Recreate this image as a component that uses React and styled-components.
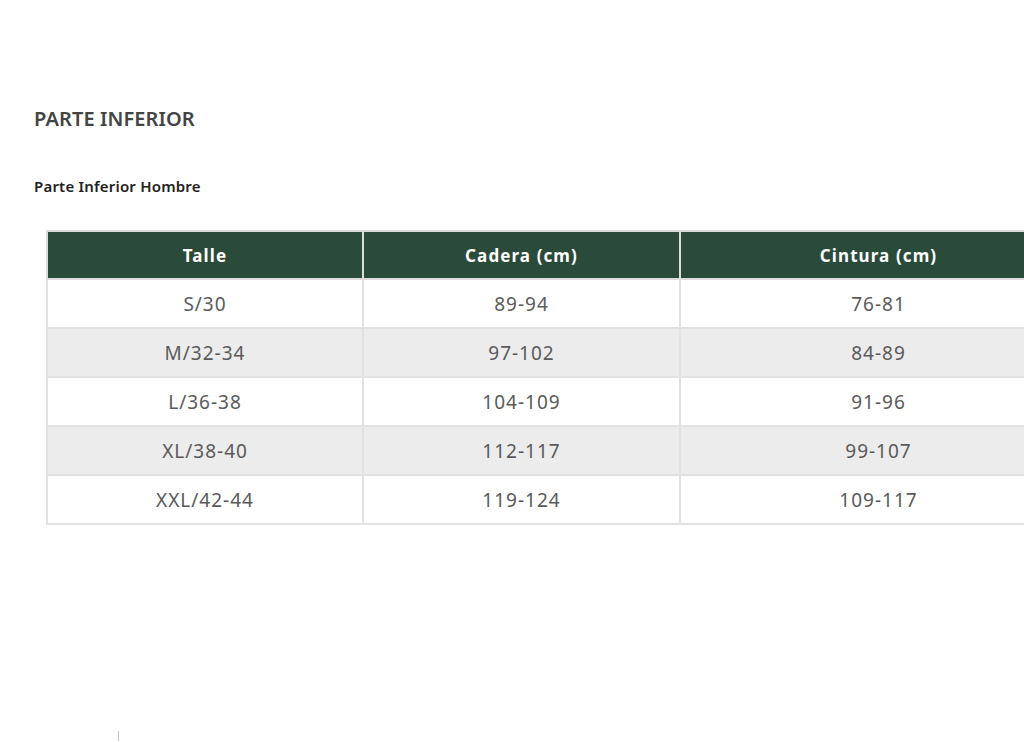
import React from "react";
import styled, { createGlobalStyle } from "styled-components";

const Global = createGlobalStyle`
  html, body {
    margin: 0;
    padding: 0;
    background: #fff;
    overflow-x: hidden;
  }
  body {
    font-family: "Noto Sans", "Open Sans", sans-serif;
  }
`;

const Page = styled.div`
  width: 1024px;
  height: 742px;
  overflow: hidden;
  padding: 106px 0 0 34px;
  box-sizing: border-box;
`;

const Title = styled.h2`
  margin: 0;
  font-size: 20px;
  font-weight: 600;
  color: #444;
  line-height: 26px;
  letter-spacing: 0.1px;
`;

const Subtitle = styled.h3`
  margin: 44px 0 0;
  font-size: 15px;
  font-weight: 600;
  color: #222;
  line-height: 20px;
  letter-spacing: 0.2px;
`;

const Table = styled.table`
  margin: 34px 0 0 12px;
  border-collapse: collapse;
  width: 1024px;
  table-layout: fixed;
`;

const Head = styled.th`
  width: ${(p) => p.$w}px;
  height: 46px;
  background: #2b4b3a;
  color: #fff;
  font-size: 17px;
  font-weight: 700;
  letter-spacing: 1.1px;
  border: 2px solid #dcdcdc;
  text-align: center;
  padding: 0;
`;

const Row = styled.tr`
  background: ${(p) => (p.$shade ? "#ececec" : "#fff")};
`;

const Cell = styled.td`
  height: 47px;
  border: 2px solid #e2e2e2;
  text-align: center;
  font-size: 19px;
  letter-spacing: 1px;
  color: #5a5a5a;
  padding: 0;
`;

const Mark = styled.div`
  margin: 206px 0 0 84px;
  width: 1px;
  height: 10px;
  background: #c8c8c8;
`;

const rows = [
  ["S/30", "89-94", "76-81"],
  ["M/32-34", "97-102", "84-89"],
  ["L/36-38", "104-109", "91-96"],
  ["XL/38-40", "112-117", "99-107"],
  ["XXL/42-44", "119-124", "109-117"],
];

export default function App() {
  return (
    <Page>
      <Global />
      <Title>PARTE INFERIOR</Title>
      <Subtitle>Parte Inferior Hombre</Subtitle>
      <Table>
        <thead>
          <tr>
            <Head $w={314}>Talle</Head>
            <Head $w={315}>Cadera (cm)</Head>
            <Head $w={395}>Cintura (cm)</Head>
          </tr>
        </thead>
        <tbody>
          {rows.map((r, i) => (
            <Row key={r[0]} $shade={i % 2 === 1}>
              {r.map((c) => (
                <Cell key={c}>{c}</Cell>
              ))}
            </Row>
          ))}
        </tbody>
      </Table>
      <Mark />
    </Page>
  );
}
